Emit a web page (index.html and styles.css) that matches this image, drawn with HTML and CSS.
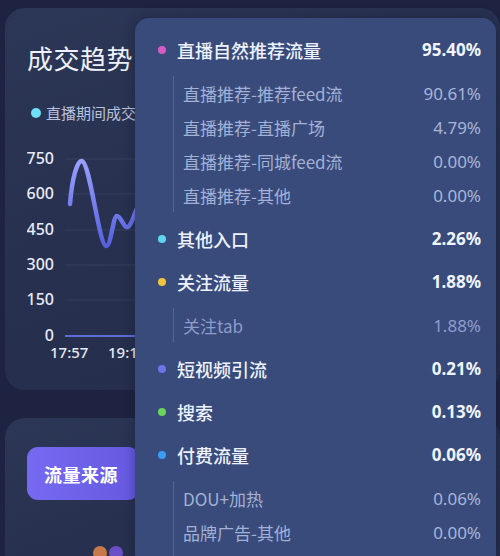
FILE: index.html
```html
<!DOCTYPE html>
<html lang="zh">
<head>
<meta charset="utf-8">
<link rel="stylesheet" href="styles.css">
</head>
<body>
<div class="page">
  <section class="card trend">
    <h1 class="title">成交趋势</h1>
    <div class="legend"><span class="ldot"></span>直播期间成交金额</div>
    <svg class="chart" width="468" height="225" viewBox="0 0 468 225">
      <defs>
        <linearGradient id="lg" x1="0" y1="0" x2="0" y2="1">
          <stop offset="0" stop-color="#9aa0ff"/>
          <stop offset="1" stop-color="#5560dc"/>
        </linearGradient>
      </defs>
      <g class="grid">
        <line x1="38" y1="15" x2="468" y2="15"/>
        <line x1="38" y1="50" x2="468" y2="50"/>
        <line x1="38" y1="86" x2="468" y2="86"/>
        <line x1="38" y1="121" x2="468" y2="121"/>
        <line x1="38" y1="156" x2="468" y2="156"/>
      </g>
      <line class="axis" x1="38" y1="192" x2="468" y2="192"/>
      <g class="ylab">
        <text x="27" y="20">750</text>
        <text x="27" y="55">600</text>
        <text x="27" y="91">450</text>
        <text x="27" y="126">300</text>
        <text x="27" y="161">150</text>
        <text x="27" y="197">0</text>
      </g>
      <g class="xlab">
        <text x="23" y="214">17:57</text>
        <text x="81" y="214">19:12</text>
      </g>
      <path class="line" d="M43 60 C 45 35, 50 16, 55 17 C 63 19, 72 101, 79 102 C 84 103, 86 72, 90 72 C 94 72, 97 85, 101 83 C 106 80, 108 64, 113 60 C 120 54, 126 40, 140 45"/>
    </svg>
  </section>
  <section class="card source">
    <button class="btn">流量来源</button>
    <div class="avatars"><span class="av a1"></span><span class="av a2"></span></div>
  </section>
</div>

<div class="tip">
  <div class="row main"><span class="dot" style="background:#d65bc6"></span><span class="name">直播自然推荐流量</span><span class="val">95.40%</span></div>
  <div class="subs">
    <div class="row sub"><span class="name">直播推荐-推荐feed流</span><span class="val">90.61%</span></div>
    <div class="row sub"><span class="name">直播推荐-直播广场</span><span class="val">4.79%</span></div>
    <div class="row sub"><span class="name">直播推荐-同城feed流</span><span class="val">0.00%</span></div>
    <div class="row sub"><span class="name">直播推荐-其他</span><span class="val">0.00%</span></div>
  </div>
  <div class="row main"><span class="dot" style="background:#5fd6f0"></span><span class="name">其他入口</span><span class="val">2.26%</span></div>
  <div class="row main"><span class="dot" style="background:#f2c53d"></span><span class="name">关注流量</span><span class="val">1.88%</span></div>
  <div class="subs">
    <div class="row sub dim"><span class="name">关注tab</span><span class="val">1.88%</span></div>
  </div>
  <div class="row main"><span class="dot" style="background:#6d74e6"></span><span class="name">短视频引流</span><span class="val">0.21%</span></div>
  <div class="row main"><span class="dot" style="background:#6cd35a"></span><span class="name">搜索</span><span class="val">0.13%</span></div>
  <div class="row main"><span class="dot" style="background:#3a9cf5"></span><span class="name">付费流量</span><span class="val">0.06%</span></div>
  <div class="subs last">
    <div class="row sub"><span class="name">DOU+加热</span><span class="val">0.06%</span></div>
    <div class="row sub"><span class="name">品牌广告-其他</span><span class="val">0.00%</span></div>
  </div>
</div>
</body>
</html>
```

FILE: styles.css
```css
* { box-sizing: border-box; }
html, body {
  margin: 0;
  padding: 0;
  width: 500px;
  height: 556px;
  overflow: hidden;
  background: #1d2340;
  font-family: "Noto Sans CJK SC", "Noto Sans", sans-serif;
}
.page {
  display: flex;
  flex-direction: column;
  gap: 28px;
  padding: 8px 0 0 5px;
  height: 556px;
  overflow: hidden;
}
.card {
  width: 495px;
  flex: none;
  border-radius: 20px;
  background: linear-gradient(160deg, #2c3656 0%, #262f4d 60%, #252d4a 100%);
}
.trend {
  height: 382px;
  padding: 33px 0 0 22px;
}
.title {
  margin: 0;
  font-size: 26px;
  line-height: 34px;
  font-weight: 400;
  color: #eef1fb;
  letter-spacing: 0.5px;
}
.legend {
  margin-top: 28px;
  display: flex;
  align-items: center;
  gap: 5px;
  font-size: 15px;
  line-height: 20px;
  color: #b8c2de;
  white-space: nowrap;
}
.ldot {
  width: 10px;
  height: 10px;
  border-radius: 50%;
  background: #6fe0f5;
  margin-left: 4px;
}
.chart {
  display: block;
  margin-top: 21px;
}
.grid line { stroke: rgba(255,255,255,0.07); stroke-width: 1; }
.axis { stroke: #5d6fd6; stroke-width: 2; }
.ylab text {
  fill: #e7ebf7;
  font-size: 16px;
  font-weight: 500;
  text-anchor: end;
  font-family: "Noto Sans", sans-serif;
}
.xlab text {
  fill: #e7ebf7;
  font-size: 15px;
  font-weight: 500;
  font-family: "Noto Sans", sans-serif;
}
.line {
  fill: none;
  stroke: url(#lg);
  stroke-width: 4.5;
  stroke-linecap: round;
}
.source {
  height: 138px;
  border-radius: 20px 20px 0 0;
  padding: 29px 0 0 22px;
  position: relative;
}
.btn {
  display: block;
  width: 112px;
  height: 53px;
  border: none;
  border-radius: 11px;
  background: linear-gradient(90deg, #776af2 0%, #6559e0 100%);
  color: #ffffff;
  font-family: "Noto Sans CJK SC", sans-serif;
  font-size: 18px;
  font-weight: 700;
  text-align: left;
  padding: 0 0 0 17px;
  letter-spacing: 0.5px;
}
.avatars {
  position: absolute;
  left: 88px;
  top: 128px;
  display: flex;
  gap: 2px;
}
.av { width: 14px; height: 14px; border-radius: 50%; display: block; }
.a1 { background: #c7794a; }
.a2 { background: #6b4fc8; }

.tip {
  position: absolute;
  left: 135px;
  top: 18px;
  width: 361px;
  height: 538px;
  overflow: hidden;
  border-radius: 14px 14px 0 0;
  background: #384b7b;
  box-shadow: 0 0 12px rgba(10, 14, 40, 0.35);
  padding: 10px 15px 0 23px;
}
.row {
  display: flex;
  align-items: center;
  white-space: nowrap;
}
.main {
  height: 43px;
}
.dot {
  width: 8px;
  height: 8px;
  border-radius: 50%;
  flex: none;
  margin-right: 11px;
}
.main .name {
  font-size: 18px;
  color: #eef2fe;
  font-weight: 500;
}
.main .val {
  margin-left: auto;
  font-family: "Noto Sans", sans-serif;
  font-size: 17px;
  font-weight: 700;
  color: #f1f4ff;
}
.subs {
  margin: 5px 0 5px 15px;
  border-left: 1px solid rgba(190, 205, 240, 0.22);
  padding-left: 9px;
}
.subs.last { padding-bottom: 40px; }
.sub { height: 34px; }
.sub .name {
  font-size: 17px;
  color: #a4b1d6;
}
.sub .val {
  margin-left: auto;
  font-family: "Noto Sans", sans-serif;
  font-size: 17px;
  color: #a9b5d8;
}
.dim .name, .dim .val { color: #8e9ccb; }
```
